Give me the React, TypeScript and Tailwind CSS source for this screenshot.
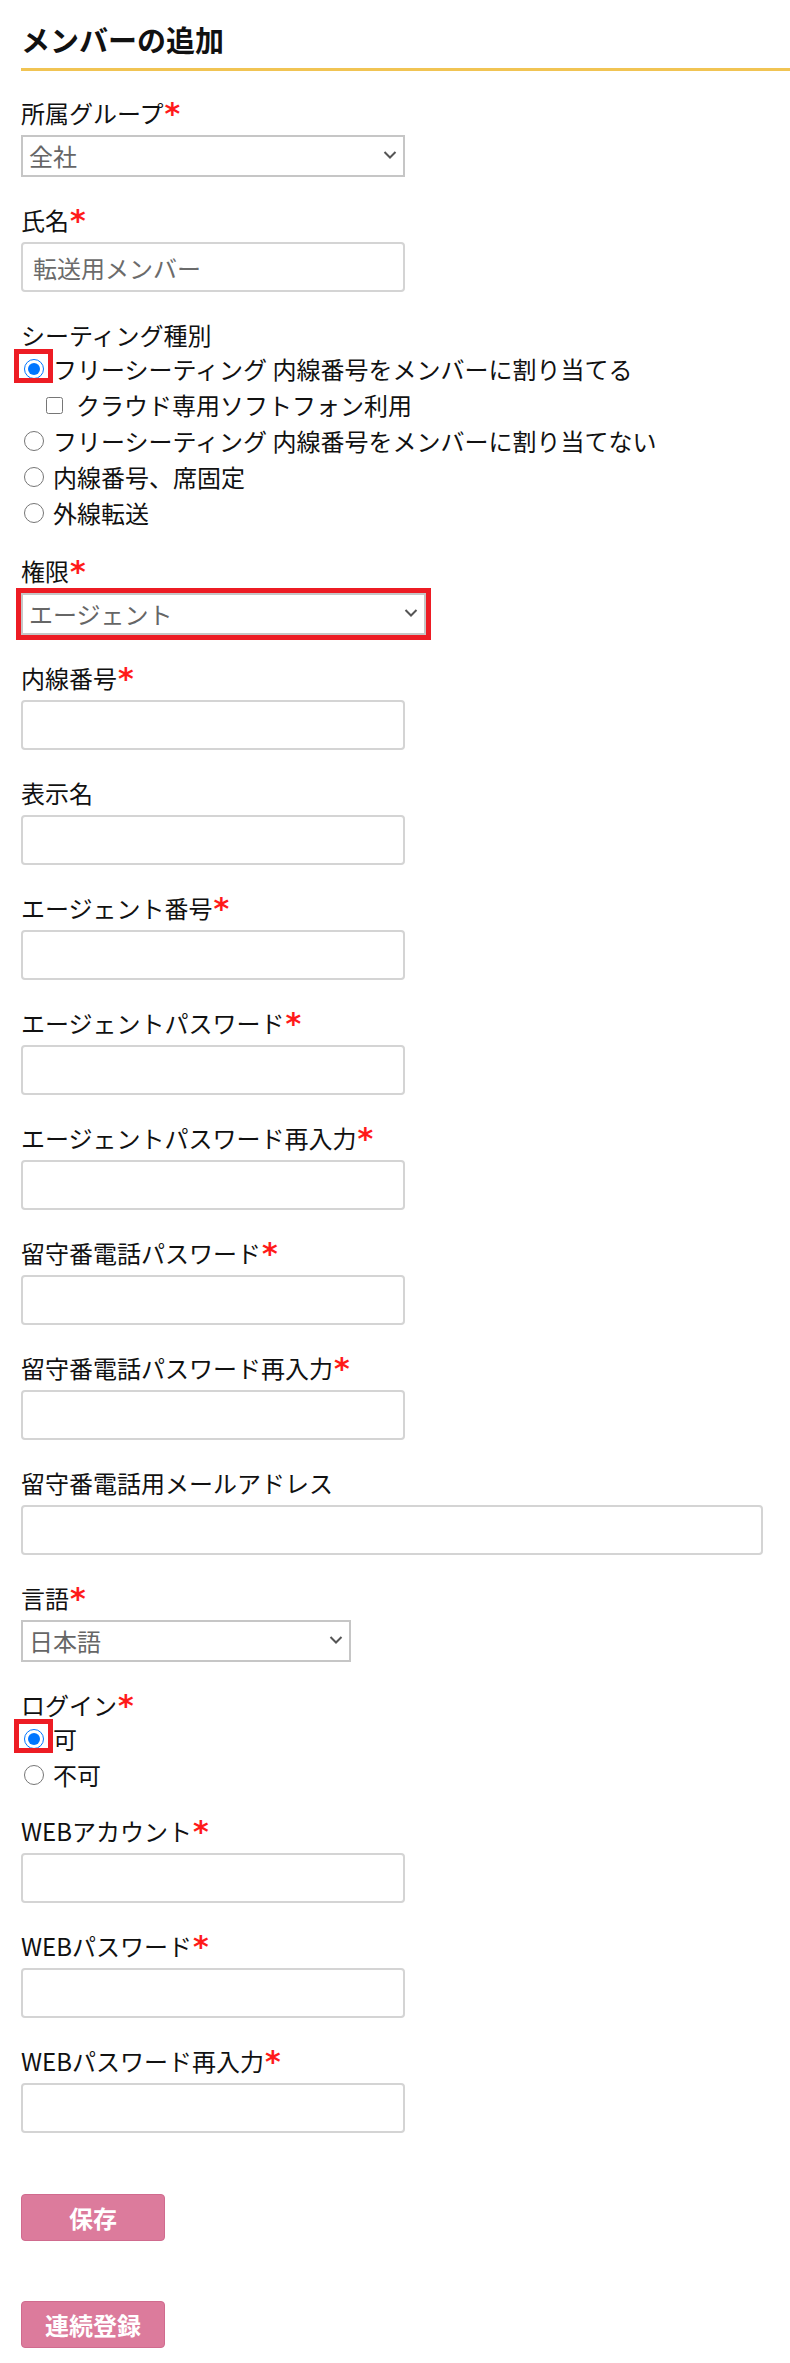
import React from 'react';

const Req = () => (
  <span className="relative top-[1px] ml-[1px] inline-block h-[32px] align-top font-['DejaVu_Sans',sans-serif] text-[30px] font-bold leading-[32px] text-[#ff1a1a]">*</span>
);

function Label({ text, required }: { text: string; required?: boolean }) {
  return (
    <div className="h-[32px] text-[24px] leading-[32px] text-[#111]">
      {text}
      {required && <Req />}
    </div>
  );
}

function TextField({ label, required, width = 'w-[384px]', placeholder }: { label: string; required?: boolean; width?: string; placeholder?: string }) {
  return (
    <div className="mb-[27px]">
      <Label text={label} required={required} />
      <input
        type="text"
        placeholder={placeholder}
        className={`mt-[6px] block h-[50px] ${width} rounded-[4px] border-2 border-[#d4d4d4] bg-white px-[10px] text-[24px] text-[#666] outline-none placeholder:text-[#6b6b6b]`}
      />
    </div>
  );
}

function SelectBox({ value, width, annotated }: { value: string; width: string; annotated?: boolean }) {
  return (
    <div className={`relative mt-[6px] ${width}`}>
      <select
        defaultValue={value}
        className={`block h-[42px] w-full appearance-none rounded-none border-2 border-[#c6c6c6] bg-white pl-[6px] text-[24px] leading-[38px] text-[#666] ${annotated ? 'outline-solid outline-[5px] outline-[#ed1c24]' : 'outline-none'}`}
      >
        <option>{value}</option>
      </select>
      <svg className="pointer-events-none absolute right-[8px] top-[15px] h-[10px] w-[14px]" viewBox="0 0 14 10" fill="none">
        <path d="M1.5 2 L7 7.5 L12.5 2" stroke="#555" strokeWidth="2" />
      </svg>
    </div>
  );
}

function RadioRow({ text, checked, marked, group }: { text: string; checked?: boolean; marked?: boolean; group: string }) {
  return (
    <label className="flex h-[36px] items-center text-[24px] leading-[32px] text-[#111]">
      <span className="relative ml-[3px] mr-[9px] inline-flex">
        <input type="radio" name={group} defaultChecked={checked} className="m-0 h-[20px] w-[20px]" />
        {marked && (
          <span className="pointer-events-none absolute -bottom-[4px] -left-[10px] -right-[9px] -top-[10px] border-[5px] border-[#ed1c24]" />
        )}
      </span>
      {text}
    </label>
  );
}

export default function App() {
  return (
    <div className="min-h-[2363px] bg-white pb-[14px] pl-[21px] pt-[19px] font-['Noto_Sans_CJK_JP',sans-serif] text-[#111]">
      <h1 className="border-b-[3px] border-[#f1c453] pb-[9px] text-[29px] font-bold leading-[40px] text-[#111]">
        メンバーの追加
      </h1>

      <div className="pt-[26px]">
        <div className="mb-[27px]">
          <Label text="所属グループ" required />
          <SelectBox value="全社" width="w-[384px]" />
        </div>

        <TextField label="氏名" required placeholder="転送用メンバー" />

        <div className="mb-[24px]">
          <Label text="シーティング種別" />
          <RadioRow group="seat" text="フリーシーティング 内線番号をメンバーに割り当てる" checked marked />
          <label className="flex h-[36px] items-center text-[24px] leading-[32px] text-[#111]">
            <input type="checkbox" className="m-0 ml-[25px] mr-[13px] h-[17px] w-[17px]" />
            クラウド専用ソフトフォン利用
          </label>
          <RadioRow group="seat" text="フリーシーティング 内線番号をメンバーに割り当てない" />
          <RadioRow group="seat" text="内線番号、席固定" />
          <RadioRow group="seat" text="外線転送" />
        </div>

        <div className="mb-[27px]">
          <Label text="権限" required />
          <SelectBox value="エージェント" width="w-[405px]" annotated />
        </div>

        <TextField label="内線番号" required />
        <TextField label="表示名" />
        <TextField label="エージェント番号" required />
        <TextField label="エージェントパスワード" required />
        <TextField label="エージェントパスワード再入力" required />
        <TextField label="留守番電話パスワード" required />
        <TextField label="留守番電話パスワード再入力" required />
        <TextField label="留守番電話用メールアドレス" width="w-[742px]" />

        <div className="mb-[27px]">
          <Label text="言語" required />
          <SelectBox value="日本語" width="w-[330px]" />
        </div>

        <div className="mb-[22px]">
          <Label text="ログイン" required />
          <RadioRow group="login" text="可" checked marked />
          <RadioRow group="login" text="不可" />
        </div>

        <TextField label="WEBアカウント" required />
        <TextField label="WEBパスワード" required />
        <TextField label="WEBパスワード再入力" required />

        <button className="mt-[61px] block h-[47px] w-[144px] rounded-[4px] border border-[#d06b8e] bg-[#dc7b9c] text-[24px] font-bold text-white">
          保存
        </button>
        <button className="mt-[60px] block h-[47px] w-[144px] rounded-[4px] border border-[#d06b8e] bg-[#dc7b9c] text-[24px] font-bold text-white">
          連続登録
        </button>
      </div>
    </div>
  );
}
